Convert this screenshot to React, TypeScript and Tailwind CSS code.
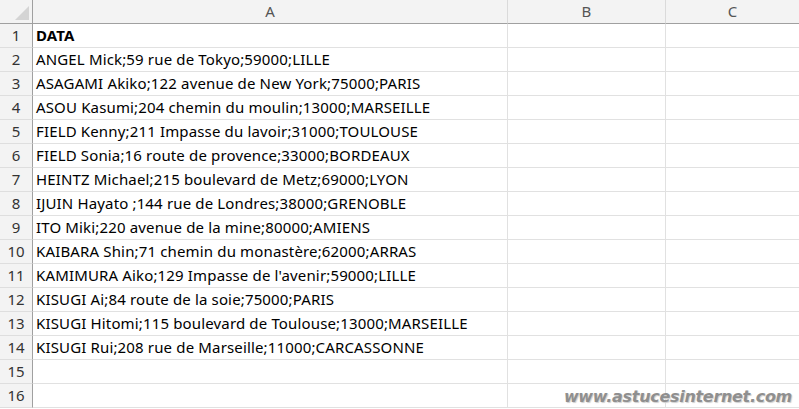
import React from "react";

const rows = [
  "DATA",
  "ANGEL Mick;59 rue de Tokyo;59000;LILLE",
  "ASAGAMI Akiko;122 avenue de New York;75000;PARIS",
  "ASOU Kasumi;204 chemin du moulin;13000;MARSEILLE",
  "FIELD Kenny;211 Impasse du lavoir;31000;TOULOUSE",
  "FIELD Sonia;16 route de provence;33000;BORDEAUX",
  "HEINTZ Michael;215 boulevard de Metz;69000;LYON",
  "IJUIN Hayato ;144 rue de Londres;38000;GRENOBLE",
  "ITO Miki;220 avenue de la mine;80000;AMIENS",
  "KAIBARA Shin;71 chemin du monastère;62000;ARRAS",
  "KAMIMURA Aiko;129 Impasse de l'avenir;59000;LILLE",
  "KISUGI Ai;84 route de la soie;75000;PARIS",
  "KISUGI Hitomi;115 boulevard de Toulouse;13000;MARSEILLE",
  "KISUGI Rui;208 rue de Marseille;11000;CARCASSONNE",
  "",
  "",
];

export default function App() {
  return (
    <div
      className="relative w-[799px] h-[409px] overflow-hidden bg-white text-black"
      style={{ fontFamily: '"Noto Sans", "Open Sans", sans-serif' }}
    >
      <div className="grid grid-cols-[33px_475px_158px_1fr]">
        <div className="h-[24px] bg-[#f3f3f3] border-r border-b border-[#a0a0a0] flex items-end justify-end p-[3px]">
          <svg width="14" height="14" viewBox="0 0 14 14">
            <polygon points="14,0 14,14 0,14" fill="#d4d4d4" />
          </svg>
        </div>
        <div className="h-[24px] bg-[#f3f3f3] border-r border-b border-r-[#dadada] border-b-[#a0a0a0] flex items-center justify-center text-[15px] text-[#555]">
          A
        </div>
        <div className="h-[24px] bg-[#f3f3f3] border-r border-b border-r-[#dadada] border-b-[#a0a0a0] flex items-center justify-center text-[15px] text-[#555]">
          B
        </div>
        <div className="h-[24px] bg-[#f3f3f3] border-b border-b-[#a0a0a0] flex items-center justify-center text-[15px] text-[#555]">
          C
        </div>
        {rows.map((t, i) => (
          <React.Fragment key={i}>
            <div className="h-[24px] bg-[#f3f3f3] border-r border-b border-r-[#a0a0a0] border-b-[#dedede] flex items-center justify-center text-[15px] text-[#333]">
              {i + 1}
            </div>
            <div
              className={`h-[24px] border-r border-b border-[#e1e1e1] flex items-center pl-[3px] text-[15px] whitespace-nowrap overflow-visible tracking-[0.15px] ${
                i === 0 ? "font-bold" : ""
              }`}
            >
              {t}
            </div>
            <div className="h-[24px] border-r border-b border-[#e1e1e1]" />
            <div className="h-[24px] border-b border-[#e1e1e1]" />
          </React.Fragment>
        ))}
      </div>
      <div
        className="absolute right-[7px] top-[385px] text-[16px] italic font-bold text-[#8f8f8f]"
        style={{ textShadow: "1px 1px 1px #cfcfcf", fontFamily: '"DejaVu Sans", sans-serif', letterSpacing: "-0.3px" }}
      >
        www.astucesinternet.com
      </div>
    </div>
  );
}
